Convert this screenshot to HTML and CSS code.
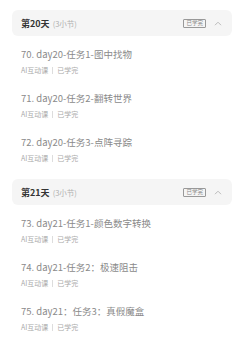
FILE: index.html
```html
<html>
<head>
    <meta charset="utf-8">
    <title>课程目录</title>
    <link rel="stylesheet" href="styles.css">
</head>
<body>
<div class="list">
    <div class="group">
        <div class="day-head">
            <span class="day-name">第20天</span>
            <span class="day-count">(3小节)</span>
            <span class="badge">已学完</span>
            <svg class="arrow" width="8" height="5" viewBox="0 0 8 5"><path d="M1 4.2 L4 1.2 L7 4.2" fill="none" stroke="#bbb" stroke-width="1"/></svg>
        </div>
        <div class="item">
            <div class="item-title">70. day20-任务1-图中找物</div>
            <div class="item-meta">AI互动课<i class="sep"></i>已学完</div>
        </div>
        <div class="item">
            <div class="item-title">71. day20-任务2-翻转世界</div>
            <div class="item-meta">AI互动课<i class="sep"></i>已学完</div>
        </div>
        <div class="item">
            <div class="item-title">72. day20-任务3-点阵寻踪</div>
            <div class="item-meta">AI互动课<i class="sep"></i>已学完</div>
        </div>
    </div>
    <div class="group">
        <div class="day-head">
            <span class="day-name">第21天</span>
            <span class="day-count">(3小节)</span>
            <span class="badge">已学完</span>
            <svg class="arrow" width="8" height="5" viewBox="0 0 8 5"><path d="M1 4.2 L4 1.2 L7 4.2" fill="none" stroke="#bbb" stroke-width="1"/></svg>
        </div>
        <div class="item">
            <div class="item-title">73. day21-任务1-颜色数字转换</div>
            <div class="item-meta">AI互动课<i class="sep"></i>已学完</div>
        </div>
        <div class="item">
            <div class="item-title">74. day21-任务2：极速阻击</div>
            <div class="item-meta">AI互动课<i class="sep"></i>已学完</div>
        </div>
        <div class="item">
            <div class="item-title">75. day21：任务3：真假魔盒</div>
            <div class="item-meta">AI互动课<i class="sep"></i>已学完</div>
        </div>
    </div>
</div>
</body>
</html>
```

FILE: styles.css
```css
*{
    margin: 0;
    padding: 0;
}
body{
    background: #fff;
    font-family: "Noto Sans CJK SC", "Noto Sans", sans-serif;
}
.list{
    padding: 10px 15px 0 12px;
}
.group{
    margin-bottom: 4px;
}
/* 天数标题栏 */
.day-head{
    display: flex;
    align-items: center;
    height: 26px;
    padding: 0 10px 0 9px;
    background: #f5f5f5;
    border-radius: 6px;
    margin-bottom: 11px;
}
.day-name{
    font-size: 9px;
    font-weight: bold;
    color: #333;
}
.day-count{
    font-size: 7.5px;
    color: #b0b0b0;
    margin-left: 3px;
    flex: 1;
}
.badge{
    font-size: 5.5px;
    line-height: 7px;
    color: #888;
    border: 1px solid #999;
    padding: 0 2px;
    border-radius: 1px;
}
.arrow{
    margin-left: 8px;
}
/* 小节 */
.item{
    padding-left: 9px;
    margin-bottom: 15px;
}
.item-title{
    font-size: 9.5px;
    line-height: 14px;
    color: #8a8a8a;
}
.item-meta{
    display: flex;
    align-items: center;
    margin-top: 3px;
    font-size: 7px;
    line-height: 12px;
    color: #aaa;
}
.sep{
    width: 1px;
    height: 7px;
    background: #ddd;
    margin: 0 4px;
}
```
